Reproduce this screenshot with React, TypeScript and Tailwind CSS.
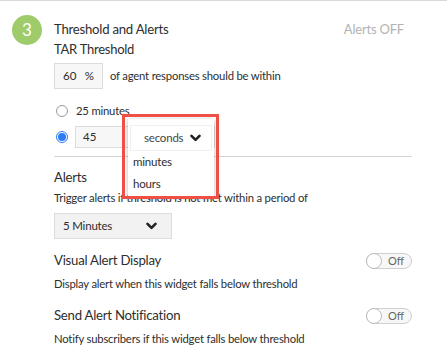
function Chevron() {
  return (
    <svg width="11" height="8" viewBox="0 0 11 8" fill="none" stroke="#222" strokeWidth="2.6" strokeLinecap="round" strokeLinejoin="round">
      <polyline points="1.5,1.8 5.5,5.8 9.5,1.8" />
    </svg>
  );
}

function Toggle() {
  return (
    <div className="relative w-[46px] h-[16px] rounded-full border border-[#cfcfcf] bg-[#f7f7f7]">
      <div className="absolute left-[-1px] top-[-1px] w-[16px] h-[16px] rounded-full bg-white border border-[#bdbdbd]" />
      <span className="absolute left-[21px] top-0 leading-[14px] text-[11px] text-[#666]">Off</span>
    </div>
  );
}

export default function App() {
  return (
    <div className="relative w-[447px] h-[362px] overflow-hidden bg-white border-t border-[#d9d9d9] text-[#2e2e2e] font-['Lato',sans-serif]">
      <div className="flex gap-3 pl-3 pt-[14px]">
        <div className="w-[30px] h-[30px] shrink-0 rounded-full bg-[#9fcb6b] text-white text-[17px] flex items-center justify-center">
          3
        </div>
        <div className="w-[358px] pt-[5px]">
          <div className="flex justify-between items-center leading-[19px]">
            <span className="text-[13.2px] tracking-[-0.25px]">Threshold and Alerts</span>
            <span className="text-[13px] tracking-[-0.2px] text-[#b3b3b3] pr-2">Alerts OFF</span>
          </div>
          <div className="mt-px text-[13px] tracking-[-0.25px] leading-[19px]">TAR Threshold</div>

          <div className="mt-[4px] flex items-center gap-[7px]">
            <div className="flex items-center h-[26px] w-[49px] border border-[#dcdcdc] bg-[#f7f7f7] text-[11.5px] pl-[8px] pr-[8px] justify-between">
              <span>60</span>
              <span>%</span>
            </div>
            <span className="text-[11.3px] tracking-[-0.2px]">of agent responses should be within</span>
          </div>

          <div className="mt-[12px] h-[20px] flex items-center gap-[8px] pl-[2px]">
            <span className="w-[12px] h-[12px] rounded-full border border-[#999] bg-white" />
            <span className="text-[11.3px] tracking-[-0.2px]">25 minutes</span>
          </div>

          <div className="mt-[5px] h-[22px] flex items-center gap-[7px] pl-[2px]">
            <span className="w-[12px] h-[12px] rounded-full border border-[#2b7cf6] bg-white flex items-center justify-center">
              <span className="w-[8px] h-[8px] rounded-full bg-[#2b7cf6]" />
            </span>
            <div className="flex h-[22px]">
              <div className="w-[54px] h-full border border-[#dcdcdc] bg-[#f7f7f7] text-[11.5px] flex items-center pl-[7px]">45</div>
              <div className="w-[86px] h-full border border-[#dcdcdc] bg-[#f7f7f7]" />
            </div>
          </div>

          <div className="mt-[8px] h-px bg-[#d6d6d6]" />

          <div className="mt-[10px] text-[13.2px] tracking-[-0.25px] leading-[20px]">Alerts</div>
          <div className="mt-[2px] text-[11.3px] tracking-[-0.2px] leading-[18px]">Trigger alerts if threshold is not met within a period of</div>

          <div className="mt-[6px] w-[118px] h-[26px] border border-[#dcdcdc] bg-[#f2f2f2] flex items-center justify-between pl-[8px] pr-[14px] text-[11.5px] tracking-[-0.2px]">
            <span>5 Minutes</span>
            <Chevron />
          </div>

          <div className="mt-[12px] h-[20px] flex items-center justify-between">
            <span className="text-[13.2px] tracking-[-0.25px]">Visual Alert Display</span>
            <Toggle />
          </div>
          <div className="mt-[4px] text-[11.3px] tracking-[-0.2px] leading-[18px]">Display alert when this widget falls below threshold</div>

          <div className="mt-[13px] h-[20px] flex items-center justify-between">
            <span className="text-[13.2px] tracking-[-0.25px]">Send Alert Notification</span>
            <Toggle />
          </div>
          <div className="mt-[4px] text-[11.3px] tracking-[-0.2px] leading-[18px]">Notify subscribers if this widget falls below threshold</div>
        </div>
      </div>

      <div className="absolute left-[128px] top-[118px] w-[86px] h-[78px] bg-white shadow-[0_1px_4px_rgba(0,0,0,0.3)] text-[11.5px] tracking-[-0.2px] pt-[6px]">
        <div className="h-[26px] flex items-center pl-[13px] gap-[7px] border border-[#f0f0f0] mx-[2px]">
          <span className="text-[#444]">seconds</span>
          <Chevron />
        </div>
        <div className="pl-[5px] h-[22px] leading-[22px]">minutes</div>
        <div className="pl-[5px] h-[22px] leading-[22px]">hours</div>
      </div>

      <div className="absolute left-[122px] top-[113px] w-[97px] h-[85px] border-[3px] border-[#ef4f45]" />
    </div>
  );
}
